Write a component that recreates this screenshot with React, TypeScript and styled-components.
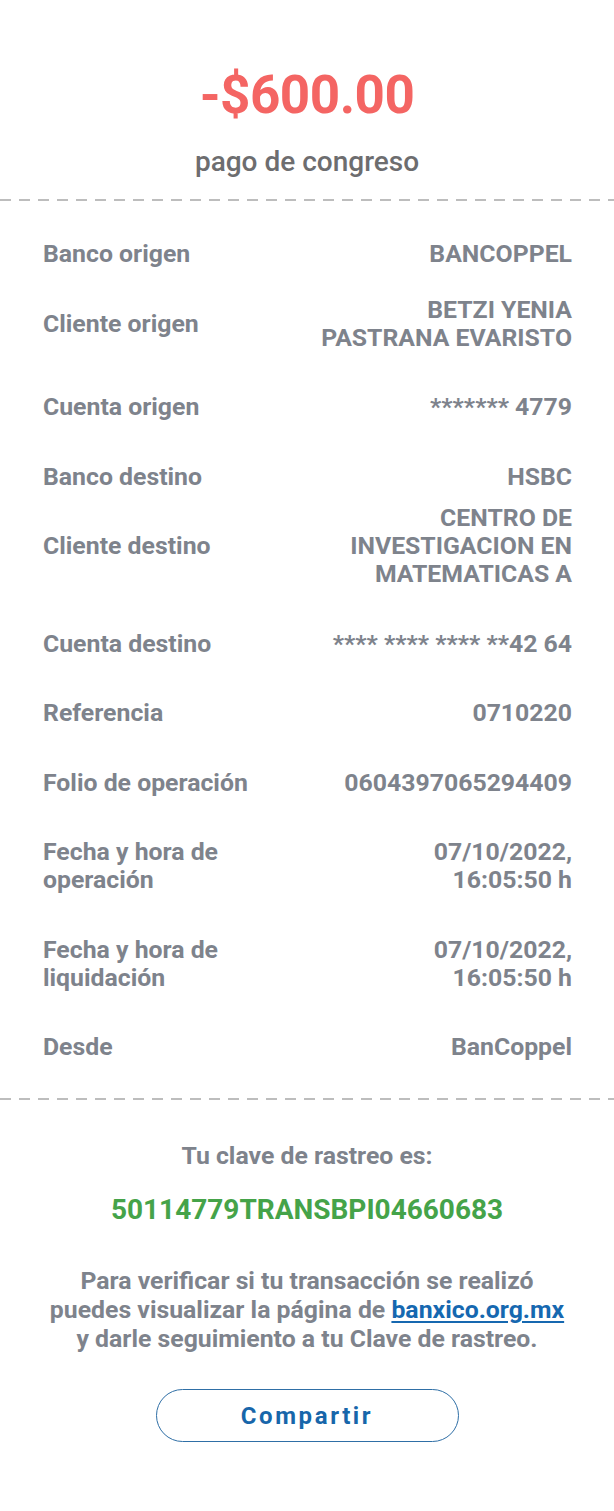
import React from "react";
import styled, { createGlobalStyle } from "styled-components";

const Global = createGlobalStyle`
  html, body { margin: 0; padding: 0; background: #ffffff; }
  body { font-family: Roboto, "Noto Sans", "Liberation Sans", sans-serif; -webkit-font-smoothing: antialiased; }
  * { box-sizing: border-box; }
`;

const Page = styled.main`
  width: 614px;
  min-height: 1511px;
  background: #fff;
  display: flex;
  flex-direction: column;
  padding-top: 63px;
`;

const Header = styled.header`
  display: flex;
  flex-direction: column;
  align-items: center;
`;

const Amount = styled.div`
  font-size: 53px;
  line-height: 64px;
  font-weight: 700;
  color: #f46563;
  letter-spacing: -0.5px;
`;

const Concept = styled.div`
  margin-top: 18px;
  font-size: 28px;
  line-height: 34px;
  font-weight: 500;
  color: #6d6d6f;
`;

const Dashed = styled.div<{ $top: number }>`
  margin-top: ${(p) => p.$top}px;
  height: 2px;
  width: 100%;
  background-image: linear-gradient(to right, #bdbdbd 0 11px, transparent 11px 19px);
  background-size: 19px 2px;
  background-repeat: repeat-x;
`;

const Details = styled.section`
  display: flex;
  flex-direction: column;
  gap: 41.5px;
  padding: 39px 42px 0 43px;
`;

const Row = styled.div<{ $lift: number }>`
  display: flex;
  justify-content: space-between;
  align-items: center;
  margin-top: ${(p) => -p.$lift}px;
  font-size: 24.8px;
  line-height: 28px;
  font-weight: 700;
  color: #7e838c;
`;

const Label = styled.div`
  max-width: 236px;
`;

const Value = styled.div`
  max-width: 264px;
  text-align: right;
`;

const Footer = styled.section`
  display: flex;
  flex-direction: column;
  align-items: center;
  padding-top: 42px;
`;

const TrackTitle = styled.div`
  font-size: 24.8px;
  line-height: 28px;
  font-weight: 700;
  color: #7e838c;
`;

const TrackCode = styled.div`
  margin-top: 25px;
  font-size: 28px;
  line-height: 30px;
  font-weight: 700;
  color: #45a349;
`;

const Note = styled.p`
  margin: 41px 0 0;
  text-align: center;
  font-size: 24.8px;
  line-height: 29px;
  font-weight: 700;
  color: #7e838c;
  width: 527px;
`;

const Link = styled.a`
  color: #1668b0;
  text-decoration: underline;
  text-underline-offset: 3px;
`;

const ShareButton = styled.button`
  margin-top: 36px;
  width: 303px;
  height: 53px;
  border-radius: 27px;
  border: 1.5px solid #2f6fa6;
  background: #fff;
  color: #1766aa;
  font-family: Roboto, "Noto Sans", sans-serif;
  font-size: 24px;
  font-weight: 700;
  letter-spacing: 2.6px;
  cursor: pointer;
`;

type Item = { label: React.ReactNode; value: React.ReactNode; lift?: number };

const items: Item[] = [
  { label: "Banco origen", value: "BANCOPPEL" },
  { label: "Cliente origen", value: "BETZI YENIA PASTRANA EVARISTO", lift: 14 },
  { label: "Cuenta origen", value: "******* 4779" },
  { label: "Banco destino", value: "HSBC" },
  { label: "Cliente destino", value: "CENTRO DE INVESTIGACION EN MATEMATICAS A", lift: 28 },
  { label: "Cuenta destino", value: "**** **** **** **42 64" },
  { label: "Referencia", value: "0710220" },
  { label: "Folio de operación", value: "0604397065294409" },
  { label: "Fecha y hora de operación", value: <>07/10/2022,<br />16:05:50 h</> },
  { label: "Fecha y hora de liquidación", value: <>07/10/2022,<br />16:05:50 h</> },
  { label: "Desde", value: "BanCoppel" },
];

export default function App() {
  return (
    <>
      <Global />
      <Page>
        <Header>
          <Amount>-$600.00</Amount>
          <Concept>pago de congreso</Concept>
        </Header>
        <Dashed $top={20} />
        <Details>
          {items.map((it, i) => (
            <Row key={i} $lift={it.lift ?? 0}>
              <Label>{it.label}</Label>
              <Value>{it.value}</Value>
            </Row>
          ))}
        </Details>
        <Dashed $top={37} />
        <Footer>
          <TrackTitle>Tu clave de rastreo es:</TrackTitle>
          <TrackCode>50114779TRANSBPI04660683</TrackCode>
          <Note>
            Para verificar si tu transacción se realizó puedes visualizar la página de{" "}
            <Link href="#">banxico.org.mx</Link> y darle seguimiento a tu Clave de rastreo.
          </Note>
          <ShareButton>Compartir</ShareButton>
        </Footer>
      </Page>
    </>
  );
}
